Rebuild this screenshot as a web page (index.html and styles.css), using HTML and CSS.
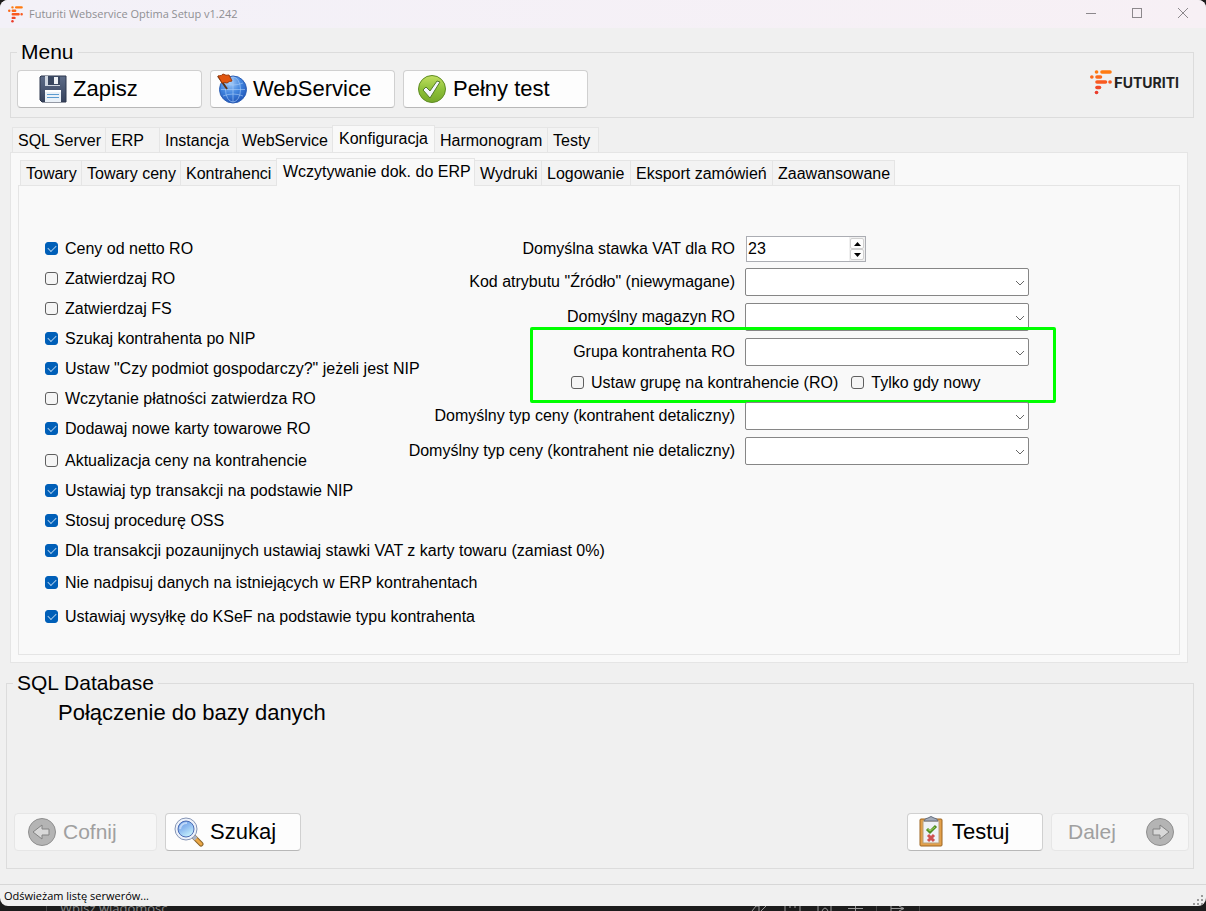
FILE: index.html
```html
<!DOCTYPE html>
<html lang="pl">
  <head>
    <meta charset="utf-8">
    <title>Futuriti Webservice Optima Setup v1.242</title>
    <link rel="stylesheet" href="styles.css">
  </head>
<body>

  <div class="window">
    <header class="titlebar">
      <svg class="app-icon" width="15" height="17" viewBox="0 0 22 25">
        <g fill="none" stroke-width="3.600" stroke-linecap="round">
          <path stroke="#ff7a10" d="M6.500 2h.1M12 2h8"/>
          <path stroke="#fb6a1c" d="M1.800 7h.1M7 7h3.500"/>
          <path stroke="#f95a20" d="M7 12h8.500M20 12h.1"/>
          <path stroke="#f04828" d="M7 17.500h2.500"/>
          <path stroke="#ea3c2c" d="M6.500 22.500h.1"/>
        </g>
      </svg>
      <span class="title">Futuriti Webservice Optima Setup v1.242</span>
      <button class="win-btn" aria-label="Minimalizuj">
        <svg width="12" height="12" viewBox="0 0 12 12"><path d="M1 5.500h10"/></svg>
      </button>
      <button class="win-btn" aria-label="Maksymalizuj">
        <svg width="12" height="12" viewBox="0 0 12 12"><rect x="1.500" y="0.500" width="9" height="9"/></svg>
      </button>
      <button class="win-btn" aria-label="Zamknij">
        <svg width="12" height="12" viewBox="0 0 12 12"><path d="M1 0l10 10M11 0L1 10"/></svg>
      </button>
    </header>

    <fieldset class="menu">
      <legend>Menu</legend>
      <button class="btn save">
        <svg width="28" height="28" viewBox="0 0 28 28">
          <defs>
            <linearGradient id="disk" x1="0" y1="0" x2="0" y2="1">
              <stop offset="0" stop-color="#5d6c88"/><stop offset="1" stop-color="#36425c"/>
            </linearGradient>
          </defs>
          <path d="M2 1h25v26H3l-2-2V2z" fill="url(#disk)" stroke="#2c364c"/>
          <rect x="6" y="1" width="15" height="10" fill="#cfd6e0"/>
          <path d="M9 1h12v9H9z" fill="#3a4760"/>
          <rect x="15" y="2" width="4" height="7" fill="#eef2f6"/>
          <rect x="6" y="15" width="16" height="12" fill="#eaf1f8"/>
          <rect x="6" y="15" width="16" height="2" fill="#fff"/>
          <path d="M8 19.500h12M8 22.500h12" stroke="#5b9bd0"/>
        </svg>
        Zapisz
      </button>
      <button class="btn web">
        <svg width="32" height="32" viewBox="0 0 32 32">
          <defs>
            <radialGradient id="globe" cx="0.4" cy="0.25" r="0.8">
              <stop offset="0" stop-color="#a5ccf8"/><stop offset="0.5" stop-color="#4285df"/><stop offset="1" stop-color="#1c50b4"/>
            </radialGradient>
          </defs>
          <circle cx="16" cy="16.500" r="13.500" fill="url(#globe)" stroke="#2b5db4"/>
          <g fill="none" stroke="#a9cdf8" stroke-opacity="0.6">
            <path d="M16 4v25M4 16.500h24M6 10q10 4 20 0M6 23q10-4 20 0"/>
            <ellipse cx="16" cy="16.500" rx="7.500" ry="12.500"/>
          </g>
          <path d="M1 3l9 13" stroke="#5b3418" stroke-width="2"/>
          <path d="M1 3q4 0 5-2 3 2 6 1l3 6q-3 0-5 2-2-1-5 0z" fill="#e2560f" stroke="#9f3907"/>
        </svg>
        WebService
      </button>
      <button class="btn full">
        <svg width="30" height="30" viewBox="0 0 30 30">
          <defs>
            <linearGradient id="green" x1="0" y1="0" x2="0" y2="1">
              <stop offset="0" stop-color="#c2df62"/><stop offset="0.5" stop-color="#8fc23a"/><stop offset="1" stop-color="#76a82a"/>
            </linearGradient>
          </defs>
          <circle cx="15" cy="15" r="13.500" fill="url(#green)" stroke="#5f8c24"/>
          <path d="M6 16l3-3 4 4 7-10 3 1-10 16z" fill="#f4f7ff" stroke="#547a2c"/>
        </svg>
        Pełny test
      </button>
      <div class="logo">
        <svg width="22" height="25" viewBox="0 0 22 25">
          <g fill="none" stroke-width="3.600" stroke-linecap="round">
            <path stroke="#ff7a10" d="M6.500 2h.1M12 2h8"/>
            <path stroke="#fb6a1c" d="M1.800 7h.1M7 7h3.500"/>
            <path stroke="#f95a20" d="M7 12h8.500M20 12h.1"/>
            <path stroke="#f04828" d="M7 17.500h2.500"/>
            <path stroke="#ea3c2c" d="M6.500 22.500h.1"/>
          </g>
        </svg>
        <span class="logo-text">F<small>UTURITI</small></span>
      </div>
    </fieldset>

    <nav class="tabs main-tabs">
      <button class="tab w93">SQL Server</button>
      <button class="tab w54">ERP</button>
      <button class="tab w77">Instancja</button>
      <button class="tab w96">WebService</button>
      <button class="tab selected w103">Konfiguracja</button>
      <button class="tab w112">Harmonogram</button>
      <button class="tab w52">Testy</button>
    </nav>
    <main class="page">
      <nav class="tabs">
        <button class="tab w61">Towary</button>
        <button class="tab w99">Towary ceny</button>
        <button class="tab w96">Kontrahenci</button>
        <button class="tab selected w199">Wczytywanie dok. do ERP</button>
        <button class="tab w66">Wydruki</button>
        <button class="tab w89">Logowanie</button>
        <button class="tab w142">Eksport zamówień</button>
        <button class="tab w123">Zaawansowane</button>
      </nav>
      <div class="subpage">
        <div class="checks">
          <label class="check"><input type="checkbox" checked>Ceny od netto RO</label>
          <label class="check"><input type="checkbox">Zatwierdzaj RO</label>
          <label class="check"><input type="checkbox">Zatwierdzaj FS</label>
          <label class="check"><input type="checkbox" checked>Szukaj kontrahenta po NIP</label>
          <label class="check"><input type="checkbox" checked>Ustaw "Czy podmiot gospodarczy?" jeżeli jest NIP</label>
          <label class="check"><input type="checkbox">Wczytanie płatności zatwierdza RO</label>
          <label class="check"><input type="checkbox" checked>Dodawaj nowe karty towarowe RO</label>
          <label class="check spaced"><input type="checkbox">Aktualizacja ceny na kontrahencie</label>
          <label class="check"><input type="checkbox" checked>Ustawiaj typ transakcji na podstawie NIP</label>
          <label class="check"><input type="checkbox" checked>Stosuj procedurę OSS</label>
          <label class="check"><input type="checkbox" checked>Dla transakcji pozaunijnych ustawiaj stawki VAT z karty towaru (zamiast 0%)</label>
          <label class="check spaced"><input type="checkbox" checked>Nie nadpisuj danych na istniejących w ERP kontrahentach</label>
          <label class="check spaced-more"><input type="checkbox" checked>Ustawiaj wysyłkę do KSeF na podstawie typu kontrahenta</label>
        </div>

        <div class="fields">
          <div class="field vat">
            <label for="vat">Domyślna stawka VAT dla RO</label>
            <div class="spinner">
              <input type="text" id="vat" value="23">
              <div class="arrows">
                <button aria-label="Więcej"><svg width="7" height="4" viewBox="0 0 7 4"><path d="M0 4l3.500-4L7 4z"/></svg></button>
                <button aria-label="Mniej"><svg width="7" height="4" viewBox="0 0 7 4"><path d="M0 0l3.500 4L7 0z"/></svg></button>
              </div>
            </div>
          </div>
          <div class="field">
            <label for="attr">Kod atrybutu "Źródło" (niewymagane)</label>
            <div class="combo">
              <select id="attr"></select>
              <svg width="10" height="6" viewBox="0 0 10 6"><path d="M1 1l4 4 4-4"/></svg>
            </div>
          </div>
          <div class="field">
            <label for="store">Domyślny magazyn RO</label>
            <div class="combo">
              <select id="store"></select>
              <svg width="10" height="6" viewBox="0 0 10 6"><path d="M1 1l4 4 4-4"/></svg>
            </div>
          </div>
          <div class="highlight">
            <div class="field">
              <label for="group">Grupa kontrahenta RO</label>
              <div class="combo">
                <select id="group"></select>
                <svg width="10" height="6" viewBox="0 0 10 6"><path d="M1 1l4 4 4-4"/></svg>
              </div>
            </div>
            <div class="group-checks">
              <label class="check"><input type="checkbox">Ustaw grupę na kontrahencie (RO)</label>
              <label class="check"><input type="checkbox">Tylko gdy nowy</label>
            </div>
          </div>
          <div class="field">
            <label for="retail">Domyślny typ ceny (kontrahent detaliczny)</label>
            <div class="combo">
              <select id="retail"></select>
              <svg width="10" height="6" viewBox="0 0 10 6"><path d="M1 1l4 4 4-4"/></svg>
            </div>
          </div>
          <div class="field">
            <label for="nonretail">Domyślny typ ceny (kontrahent nie detaliczny)</label>
            <div class="combo">
              <select id="nonretail"></select>
              <svg width="10" height="6" viewBox="0 0 10 6"><path d="M1 1l4 4 4-4"/></svg>
            </div>
          </div>
        </div>
      </div>
    </main>

    <fieldset class="database">
      <legend>SQL Database</legend>
      <p>Połączenie do bazy danych</p>
      <div class="actions">
        <button class="btn back" disabled>
          <svg width="30" height="30" viewBox="0 0 30 30">
            <circle cx="15" cy="15" r="13.500" fill="#b4b4b4" stroke="#8f8f8f"/>
            <path d="M6 15l9-7v4h7v6h-7v4z" fill="#d8d8d8" stroke="#828282"/>
          </svg>
          Cofnij
        </button>
        <button class="btn find">
          <svg width="30" height="30" viewBox="0 0 30 30">
            <defs>
              <linearGradient id="lens" x1="0" y1="0" x2="0.600" y2="1">
                <stop offset="0" stop-color="#5f96e4"/><stop offset="0.500" stop-color="#8dbaf0"/><stop offset="1" stop-color="#c4f0fc"/>
              </linearGradient>
            </defs>
            <path d="M20 20l7 7" stroke="#8b6428" stroke-width="5" stroke-linecap="round"/>
            <path d="M21 21l6 6" stroke="#eba848" stroke-width="3" stroke-linecap="round"/>
            <path d="M18 18l4 4" stroke="#aab4c6" stroke-width="4"/>
            <circle cx="12" cy="12" r="11" fill="#eef3fb" stroke="#8494b4"/>
            <circle cx="12" cy="12" r="8" fill="url(#lens)" stroke="#4b6bb4"/>
            <path d="M6 12q1-6 7-6" fill="none" stroke="#bfd7f8" stroke-width="2"/>
          </svg>
          Szukaj
        </button>
        <button class="btn test">
          <svg width="26" height="32" viewBox="0 0 26 32">
            <rect x="2" y="3" width="22" height="27" rx="1" fill="#e3a04a" stroke="#9c6420"/>
            <rect x="5" y="5" width="16" height="22" fill="#eef1f6" stroke="#b9a078"/>
            <path d="M6 5q1-3 4-3 3-3 6 0 3 0 4 3z" fill="#a4acba" stroke="#666f80"/>
            <path d="M9 13l3 3 6-6" fill="none" stroke="#4d8c22" stroke-width="3"/>
            <path d="M9.500 13l2.500 2 5-4" fill="none" stroke="#9cd45c"/>
            <path d="M10 19l6 6M16 19l-6 6" stroke="#cf5050" stroke-width="3"/>
          </svg>
          Testuj
        </button>
        <button class="btn next" disabled>
          Dalej
          <svg width="30" height="30" viewBox="0 0 30 30">
            <circle cx="15" cy="15" r="13.500" fill="#b4b4b4" stroke="#8f8f8f"/>
            <path d="M24 15l-9-7v4H8v6h7v4z" fill="#d8d8d8" stroke="#828282"/>
          </svg>
        </button>
      </div>
    </fieldset>

    <footer class="status">
      <span>Odświeżam listę serwerów...</span>
      <svg width="11" height="11" viewBox="0 0 11 11" fill="#9a9a9a">
        <path d="M8 0h2v2H8zM8 4h2v2H8zM8 8h2v2H8zM4 4h2v2H4zM4 8h2v2H4zM0 8h2v2H0z"/>
      </svg>
    </footer>
  </div>

  <!-- edge of the chat window underneath -->
  <div class="behind">
    <span>Wpisz wiadomość</span>
    <svg width="170" height="5" viewBox="0 0 170 5" fill="none" stroke="#9a9a9a">
      <path d="M2 5l4-5h3v5M11 5l5-5M35 0v5M39 1h2M44 1h2M50 0v5M68 0v5M72 5q3-6 6 0M81 0v5M98 2.500h15M105.500 0v5M141 0v5M141 2.500h13M149 0l5 2.500-5 2.500"/>
      <path d="M126.500 0v5M169.500 0v5" stroke="#444"/>
    </svg>
  </div>

</body>
</html>
```
FILE: styles.css
```css
*
{
  box-sizing: border-box;
}
body
{
  margin: 0;
  min-height: 100vh;
  display: flex;
  flex-direction: column;
  background-color: #1c1c1c;
  font-family: "Liberation Sans", Arial, sans-serif;
  font-size: 16px;
  line-height: 20px;
  color: #000;
}
button, input, select
{
  font: inherit;
  color: inherit;
  margin: 0;
  padding: 0;
}
.window
{
  flex: 1;
  display: flex;
  flex-direction: column;
  background-color: #f0f0f0;
  border-radius: 8px;
  overflow: hidden;
}
.titlebar
{
  display: flex;
  align-items: center;
  height: 28px;
  padding-left: 8px;
  background: linear-gradient(to right, #f3f1f8, #f7f0f5);
}
.title
{
  flex: 1;
  margin-left: 6px;
  font-family: "Open Sans", sans-serif;
  font-size: 11px;
  color: #8f8f93;
}
.win-btn
{
  width: 46px;
  height: 28px;
  border: none;
  background: none;
}
.win-btn svg
{
  display: block;
  margin: 0 auto;
  fill: none;
  stroke: #8c888c;
}
fieldset
{
  min-width: 0;
  border: 1px solid #dcdcdc;
  padding: 0;
}
legend
{
  padding: 0 4px;
  font-size: 21px;
  line-height: 24px;
}
.menu
{
  display: flex;
  align-items: flex-start;
  gap: 8px;
  height: 78px;
  margin: 12px 12px 0 10px;
  padding: 6px;
}
.btn
{
  display: flex;
  align-items: center;
  height: 38px;
  border: 1px solid #d0d0d0;
  border-bottom-color: #b8b8b8;
  border-radius: 4px;
  background-color: #fdfdfd;
  font-size: 22px;
}
.btn:disabled
{
  border-color: #e6e6e6;
  background-color: #f6f6f6;
  font-size: 21px;
  color: #a0a0a0;
}
.menu .btn
{
  width: 185px;
}
.save
{
  gap: 6px;
  padding-left: 21px;
}
.web
{
  gap: 4px;
  padding-left: 6px;
}
.full
{
  gap: 6px;
  padding-left: 13px;
}
.logo
{
  display: flex;
  align-items: center;
  gap: 2px;
  margin-left: auto;
  padding-right: 8px;
}
.logo-text
{
  font-family: Inter, sans-serif;
  font-size: 15px;
  font-weight: bold;
  color: #222;
}
.logo-text small
{
  font-size: 14px;
}
.tabs
{
  display: flex;
  align-items: flex-end;
  height: 27px;
  padding-left: 2px;
}
.main-tabs
{
  margin: 7px 18px 0 10px;
}
.tab
{
  height: 25px;
  border: 1px solid #e5e5e5;
  border-right: none;
  border-bottom: none;
  background-color: #f3f3f3;
  text-align: left;
  padding: 2px 0 0 5px;
  white-space: nowrap;
}
.tab:last-child
{
  border-right: 1px solid #e5e5e5;
}
.tab.selected
{
  height: 28px;
  margin-bottom: -1px;
  padding: 0 0 2px 6px;
  border-right: 1px solid #e5e5e5;
  background-color: #f9f9f9;
}
.tab.selected + .tab
{
  border-left: none;
}
.w52 { width: 52px; }
.w54 { width: 54px; }
.w61 { width: 61px; }
.w66 { width: 66px; }
.w77 { width: 77px; }
.w89 { width: 89px; }
.w93 { width: 93px; }
.w96 { width: 96px; }
.w99 { width: 99px; }
.w103 { width: 103px; }
.w112 { width: 112px; }
.w123 { width: 123px; }
.w142 { width: 142px; }
.w199 { width: 199px; }
.page
{
  margin: 0 18px 0 10px;
  padding: 5px 7px 7px;
  border: 1px solid #e5e5e5;
  background-color: #f9f9f9;
}
.subpage
{
  display: grid;
  grid-template-columns: 345px 1fr;
  min-height: 470px;
  padding: 49px 26px 20px;
  border: 1px solid #e5e5e5;
}
.checks
{
  display: flex;
  flex-direction: column;
  align-items: flex-start;
  gap: 10px;
  padding-top: 4px;
}
.check
{
  display: flex;
  align-items: center;
  gap: 7px;
  height: 20px;
  white-space: nowrap;
}
.spaced
{
  margin-top: 2px;
}
.spaced-more
{
  margin-top: 4px;
}
.check input
{
  appearance: none;
  width: 13px;
  height: 13px;
  margin-bottom: 2px;
  border: 1px solid #5f5f5f;
  border-radius: 3px;
  background-color: #f5f5f5;
}
.check input:checked
{
  display: flex;
  justify-content: center;
  border-color: #005fb8;
  background-color: #005fb8;
}
.check input:checked::before
{
  content: "";
  width: 7px;
  height: 4px;
  margin-top: 2px;
  border-left: 1px solid #a8cbea;
  border-bottom: 1px solid #a8cbea;
  transform: rotate(-45deg);
}
.fields
{
  width: 639px;
}
.field
{
  display: flex;
  justify-content: flex-end;
  align-items: center;
  gap: 10px;
  height: 28px;
  margin-bottom: 7px;
}
.field.vat
{
  margin-bottom: 5px;
}
.field label
{
  white-space: nowrap;
}
.combo
{
  position: relative;
  width: 284px;
  height: 28px;
}
.combo select
{
  appearance: none;
  display: block;
  width: 100%;
  height: 100%;
  border: 1px solid #868686;
  border-radius: 2px;
  background-color: #fff;
}
.combo svg
{
  position: absolute;
  top: 12px;
  right: 4px;
  fill: none;
  stroke: #666;
}
.spinner
{
  display: flex;
  width: 120px;
  height: 26px;
  margin-right: 163px;
  margin-left: 1px;
  border: 1px solid #abadb3;
  background-color: #fff;
}
.spinner input
{
  flex: 1;
  min-width: 0;
  padding-left: 1px;
  border: none;
  background: none;
}
.arrows
{
  display: flex;
  flex-direction: column;
  width: 16px;
  padding: 1px;
  background-color: #f0f0f0;
}
.arrows button
{
  flex: 1;
  display: flex;
  align-items: center;
  justify-content: center;
  border: 1px solid #d0d0d0;
  border-radius: 2px;
  background-color: #fdfdfd;
}
.highlight
{
  position: relative;
  height: 64px;
}
.highlight::after
{
  content: "";
  position: absolute;
  top: -11px;
  left: 140px;
  right: -27px;
  bottom: -1px;
  border: 3px solid #00ff00;
  border-radius: 2px;
  pointer-events: none;
}
.group-checks
{
  display: flex;
  gap: 13px;
  padding-left: 181px;
}
.database
{
  flex: 1;
  margin: 8px 12px 15px 6px;
  padding: 6px 4px 17px 6px;
}
.database p
{
  margin: 0 0 88px 45px;
  font-size: 22px;
  line-height: 24px;
}
.actions
{
  display: flex;
  gap: 8px;
  margin-left: 1px;
}
.back
{
  width: 143px;
  gap: 6px;
  padding-left: 12px;
}
.find
{
  width: 136px;
  gap: 6px;
  padding-left: 8px;
}
.test
{
  width: 136px;
  gap: 8px;
  padding-left: 10px;
  margin-left: auto;
}
.next
{
  width: 138px;
  justify-content: space-between;
  padding: 0 13px 0 16px;
}
.status
{
  display: flex;
  align-items: center;
  justify-content: space-between;
  height: 22px;
  padding: 0 2px 0 4px;
  border-top: 1px solid #d7d7d7;
  font-family: "Open Sans", sans-serif;
  font-size: 11px;
}
.status svg
{
  align-self: flex-end;
}
.behind
{
  display: flex;
  justify-content: space-between;
  height: 5px;
  overflow: hidden;
  margin-left: 46px;
  padding: 0 286px 0 13px;
  border-left: 1px solid #444;
  font-family: "Open Sans", sans-serif;
  font-size: 13px;
  line-height: 5px;
  color: #8a8a8a;
}
```
